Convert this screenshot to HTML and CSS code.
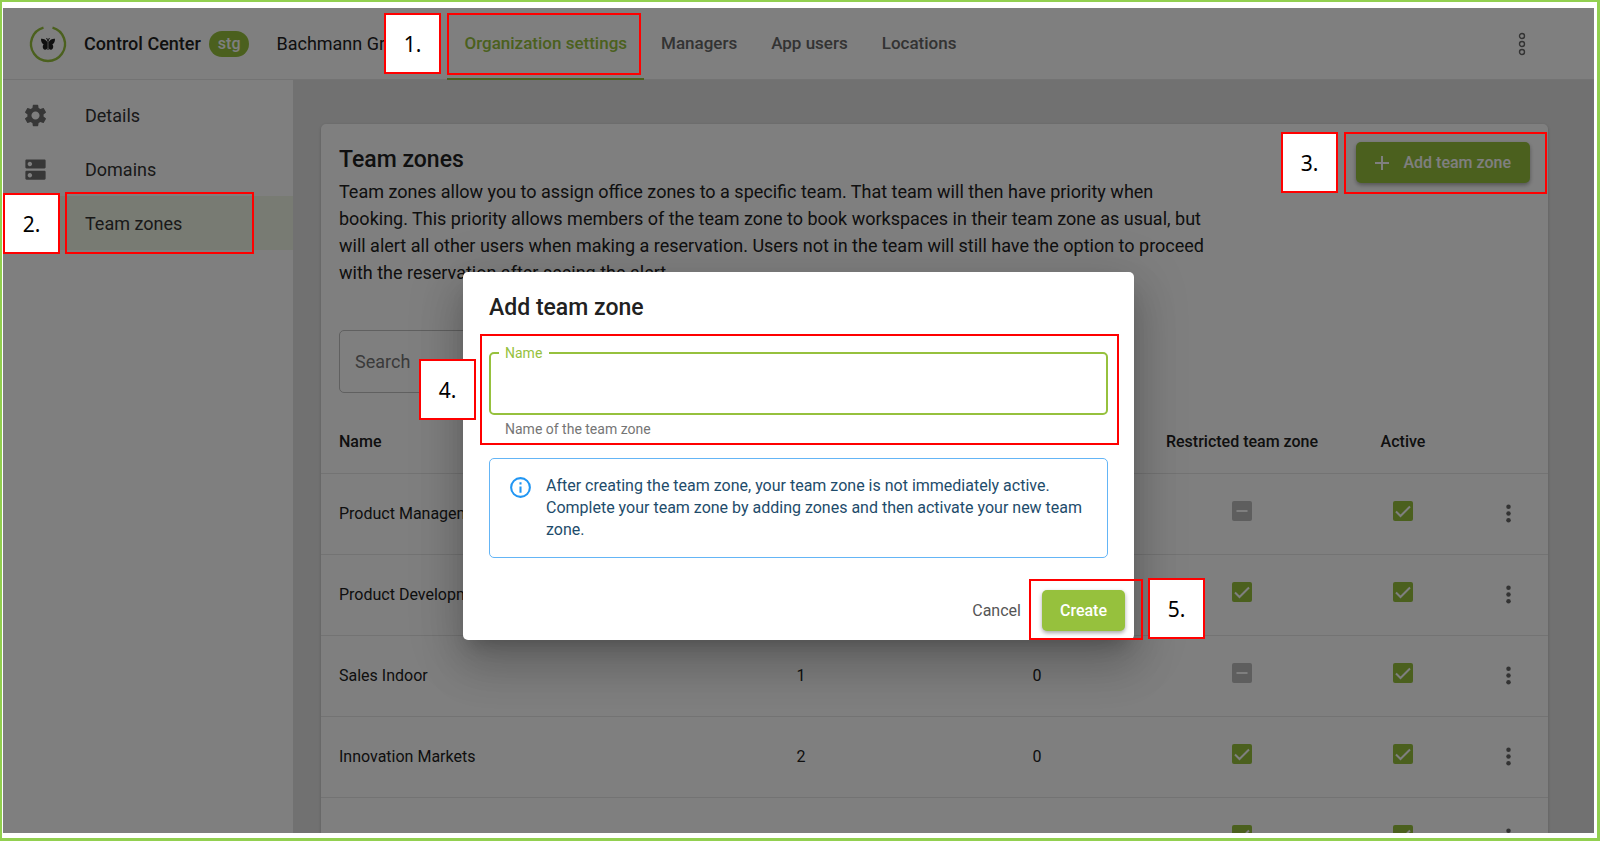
FILE: index.html
```html
<!DOCTYPE html>
<html lang="en">
<head>
<meta charset="utf-8">
<title>Control Center</title>
<link rel="stylesheet" href="styles.css">
</head>
<body>
<svg class="defs" aria-hidden="true">
  <symbol id="tick" viewBox="0 0 24 24"><rect x="2" y="2" width="20" height="20" rx="2"/><path class="mark" d="M5 12.500l4.500 4.500L19 7.500"/></symbol>
  <symbol id="dash" viewBox="0 0 24 24"><rect x="2" y="2" width="20" height="20" rx="2"/><path class="mark" d="M6.500 12h11"/></symbol>
  <symbol id="dots" viewBox="0 0 24 24"><circle cx="12" cy="6" r="2"/><circle cx="12" cy="12" r="2"/><circle cx="12" cy="18" r="2"/></symbol>
</svg>
<div class="frame">
  <div class="app">
    <header class="topbar">
      <svg class="logo" viewBox="0 0 36 36" aria-hidden="true">
        <path class="ring" d="M13.500 1.600A17 17 0 1 0 22.500 1.600"/>
        <path class="fly" d="M17.400 16C16 13.600 13.200 12.400 11 12.800c0 2.600.8 5 2.700 5.600-1.600 1.300-1.100 4.800 1.200 5.400 1.400.2 2.200-.8 2.500-2zM18.600 16c1.400-2.400 4.200-3.600 6.400-3.200 0 2.600-.8 5-2.700 5.600 1.600 1.300 1.100 4.800-1.200 5.400-1.400.2-2.200-.8-2.500-2z"/>
        <path class="feeler" d="M18 24v-9l-1.400-3M18 15l1.400-3"/>
      </svg>
      <span class="product">Control Center</span>
      <span class="stage">stg</span>
      <span class="org">Bachmann Gr</span>
      <nav class="tabs">
        <a class="tab active" href="#">Organization settings</a>
        <a class="tab" href="#">Managers</a>
        <a class="tab" href="#">App users</a>
        <a class="tab" href="#">Locations</a>
      </nav>
      <button class="icon-btn more" aria-label="More">
        <svg viewBox="0 0 8 24"><circle cx="4" cy="4" r="2.500"/><circle cx="4" cy="12" r="2.500"/><circle cx="4" cy="20" r="2.500"/></svg>
      </button>
    </header>
    <div class="body">
      <nav class="sidebar">
        <a class="side-item" href="#">
          <svg viewBox="0 0 24 24"><path d="M19.140 12.940c.04-.3.06-.61.06-.94 0-.32-.02-.64-.07-.94l2.030-1.580c.18-.14.23-.41.12-.61l-1.920-3.320c-.12-.22-.37-.29-.59-.22l-2.390.96c-.5-.38-1.030-.7-1.620-.94l-.36-2.540c-.04-.24-.24-.41-.48-.41h-3.840c-.24 0-.43.17-.47.41l-.36 2.540c-.59.24-1.130.57-1.620.94l-2.390-.96c-.22-.08-.47 0-.59.22L2.740 8.870c-.12.21-.08.47.12.61l2.030 1.580c-.05.3-.09.63-.09.94s.02.64.07.94l-2.030 1.580c-.18.14-.23.41-.12.61l1.920 3.320c.12.22.37.29.59.22l2.390-.96c.5.38 1.030.7 1.620.94l.36 2.540c.05.24.24.41.48.41h3.840c.24 0 .44-.17.47-.41l.36-2.540c.59-.24 1.130-.56 1.620-.94l2.390.96c.22.08.47 0 .59-.22l1.920-3.320c.12-.22.07-.47-.12-.61l-2.010-1.580zM12 15.600c-1.980 0-3.600-1.620-3.600-3.600s1.620-3.600 3.600-3.600 3.600 1.620 3.600 3.600-1.620 3.600-3.600 3.600z"/></svg>
          Details
        </a>
        <a class="side-item" href="#">
          <svg viewBox="0 0 24 24"><path d="M20 13H4c-.55 0-1 .45-1 1v6c0 .55.45 1 1 1h16c.55 0 1-.45 1-1v-6c0-.55-.45-1-1-1zM7 19c-1.100 0-2-.9-2-2s.9-2 2-2 2 .9 2 2-.9 2-2 2zM20 3H4c-.55 0-1 .45-1 1v6c0 .55.45 1 1 1h16c.55 0 1-.45 1-1V4c0-.55-.45-1-1-1zM7 9c-1.100 0-2-.9-2-2s.9-2 2-2 2 .9 2 2-.9 2-2 2z"/></svg>
          Domains
        </a>
        <a class="side-item selected" href="#"><span class="no-icon"></span>Team zones</a>
      </nav>
      <main class="content">
        <section class="card">
          <div class="card-head">
            <div class="intro">
              <h1>Team zones</h1>
              <p>Team zones allow you to assign office zones to a specific team. That team will then have priority when booking. This priority allows members of the team zone to book workspaces in their team zone as usual, but will alert all other users when making a reservation. Users not in the team will still have the option to proceed with the reservation after seeing the alert.</p>
            </div>
            <button class="btn add">
              <svg viewBox="0 0 14 14"><path d="M7 0v14M0 7h14"/></svg>
              Add team zone
            </button>
          </div>
          <input class="search" type="text" placeholder="Search" aria-label="Search">
          <table class="zones">
            <colgroup><col><col class="c-a"><col class="c-b"><col class="c-restricted"><col class="c-active"><col class="c-menu"></colgroup>
            <thead><tr><th>Name</th><th></th><th></th><th>Restricted team zone</th><th>Active</th><th></th></tr></thead>
            <tbody>
              <tr><td>Product Management</td><td></td><td></td>
                <td><label class="box off"><input type="checkbox" aria-label="Restricted"><svg><use href="#dash"/></svg></label></td>
                <td><label class="box"><input type="checkbox" checked aria-label="Active"><svg><use href="#tick"/></svg></label></td>
                <td><button class="icon-btn" aria-label="Actions"><svg><use href="#dots"/></svg></button></td></tr>
              <tr><td>Product Development</td><td></td><td></td>
                <td><label class="box"><input type="checkbox" checked aria-label="Restricted"><svg><use href="#tick"/></svg></label></td>
                <td><label class="box"><input type="checkbox" checked aria-label="Active"><svg><use href="#tick"/></svg></label></td>
                <td><button class="icon-btn" aria-label="Actions"><svg><use href="#dots"/></svg></button></td></tr>
              <tr><td>Sales Indoor</td><td>1</td><td>0</td>
                <td><label class="box off"><input type="checkbox" aria-label="Restricted"><svg><use href="#dash"/></svg></label></td>
                <td><label class="box"><input type="checkbox" checked aria-label="Active"><svg><use href="#tick"/></svg></label></td>
                <td><button class="icon-btn" aria-label="Actions"><svg><use href="#dots"/></svg></button></td></tr>
              <tr><td>Innovation Markets</td><td>2</td><td>0</td>
                <td><label class="box"><input type="checkbox" checked aria-label="Restricted"><svg><use href="#tick"/></svg></label></td>
                <td><label class="box"><input type="checkbox" checked aria-label="Active"><svg><use href="#tick"/></svg></label></td>
                <td><button class="icon-btn" aria-label="Actions"><svg><use href="#dots"/></svg></button></td></tr>
              <tr><td></td><td></td><td></td>
                <td><label class="box"><input type="checkbox" checked aria-label="Restricted"><svg><use href="#tick"/></svg></label></td>
                <td><label class="box"><input type="checkbox" checked aria-label="Active"><svg><use href="#tick"/></svg></label></td>
                <td><button class="icon-btn" aria-label="Actions"><svg><use href="#dots"/></svg></button></td></tr>
            </tbody>
          </table>
        </section>
      </main>
    </div>
    <div class="backdrop">
      <form class="dialog" role="dialog" aria-labelledby="dialog-title">
        <h2 id="dialog-title">Add team zone</h2>
        <fieldset class="field">
          <legend><label for="zone-name">Name</label></legend>
          <input id="zone-name" type="text" aria-describedby="zone-help">
        </fieldset>
        <p class="help" id="zone-help">Name of the team zone</p>
        <div class="info">
          <svg viewBox="0 0 24 24"><circle cx="12" cy="12" r="9"/><path d="M12 11v6M12 7v2"/></svg>
          <p>After creating the team zone, your team zone is not immediately active. Complete your team zone by adding zones and then activate your new team zone.</p>
        </div>
        <div class="actions">
          <button type="button" class="btn plain">Cancel</button>
          <button type="button" class="btn create">Create</button>
        </div>
      </form>
    </div>
  </div>
</div>
<div class="mark-box m1"></div><div class="step s1">1.</div>
<div class="mark-box m2"></div><div class="step s2">2.</div>
<div class="mark-box m3"></div><div class="step s3">3.</div>
<div class="mark-box m4"></div><div class="step s4">4.</div>
<div class="mark-box m5"></div><div class="step s5">5.</div>
</body>
</html>
```
FILE: styles.css
```css
* { box-sizing: border-box; }
body {
  margin: 0;
  font-family: Roboto, "Liberation Sans", sans-serif;
  font-size: 16px;
  color: #212121;
  background: #fff;
}
h1, h2, p { margin: 0; }
a { color: inherit; text-decoration: none; }
button, input { font: inherit; }
.defs { position: absolute; width: 0; height: 0; }
.frame {
  position: relative;
  height: 100vh;
  border: solid #92d050;
  border-width: 2px 3px 3px 2px;
  padding: 6px 3px 5px 1px;
}
.app {
  position: relative;
  height: 100%;
  display: flex;
  flex-direction: column;
  overflow: hidden;
  background: #e2e2e2;
}

/* top bar */
.topbar {
  display: flex;
  align-items: center;
  height: 72px;
  flex: none;
  padding: 0 68px 0 27px;
  background: #fff;
  border-bottom: 1px solid #e6e6e6;
}
.logo { width: 36px; height: 36px; margin-right: 18px; overflow: visible; }
.logo .ring { fill: none; stroke: #96c13d; stroke-width: 2.400; }
.logo .fly { fill: #212121; }
.logo .feeler { fill: none; stroke: #212121; stroke-width: 1; }
.product { font-size: 18px; font-weight: 500; }
.stage {
  margin-left: 8px;
  padding: 0 9px;
  height: 26px;
  line-height: 26px;
  border-radius: 13px;
  background: #96c13d;
  color: #fff;
  font-weight: 500;
}
.org { width: 171px; margin-left: 27px; font-size: 18px; white-space: nowrap; }
.tabs { display: flex; align-self: stretch; margin-bottom: -1px; }
.tab {
  display: flex;
  align-items: center;
  padding: 0 17px;
  border-bottom: 2px solid transparent;
  color: #666;
  font-size: 17px;
  font-weight: 500;
}
.tab.active { color: #96c13d; border-color: #96c13d; }
.icon-btn { padding: 0; border: 0; background: none; display: inline-grid; place-items: center; vertical-align: middle; }
.icon-btn svg { width: 27px; height: 27px; fill: #666; }
.more { margin-left: auto; }
.more svg { width: 8px; height: 24px; fill: none; stroke: #666; stroke-width: 1.400; }

/* body */
.body { display: flex; flex: 1; min-height: 0; }
.sidebar { width: 290px; flex: none; padding-top: 8px; background: #fff; color: #333; }
.side-item {
  display: flex;
  align-items: center;
  height: 54px;
  padding-left: 19px;
  font-size: 18px;
}
.side-item svg, .no-icon { width: 27px; height: 27px; margin-right: 36px; fill: #6f6f6f; }
.side-item.selected { background: #f1f6e7; }
.content { flex: 1; padding: 44px 46px 0 28px; }
.card { background: #fff; border-radius: 5px; box-shadow: 0 1px 3px rgba(0, 0, 0, .2); padding-bottom: 20px; }
.card-head { display: flex; justify-content: space-between; align-items: flex-start; padding: 18px 18px 0; }
.intro { width: 884px; }
h1 { font-size: 23px; line-height: 36px; font-weight: 500; }
.intro p { font-size: 18px; line-height: 27px; }
.btn {
  display: flex;
  align-items: center;
  height: 41px;
  padding: 0 18px;
  border: 0;
  border-radius: 5px;
  font-weight: 500;
  background: #96c13d;
  color: #fff;
  box-shadow: 0 2px 4px rgba(0, 0, 0, .35);
}
.add { padding: 0 19px; }
.add svg { width: 14px; height: 14px; margin-right: 14px; stroke: #fff; stroke-width: 2; }
.search {
  display: block;
  width: 360px;
  height: 63px;
  margin: 44px 18px 18px;
  padding: 0 15px;
  border: 1px solid #c0c0c0;
  border-radius: 5px;
  font-size: 18px;
  background: transparent;
}
.search::placeholder { color: #757575; }

/* table */
.zones { width: 100%; table-layout: fixed; border-collapse: collapse; }
.c-a { width: 232px; }
.c-b { width: 240px; }
.c-restricted { width: 170px; }
.c-active { width: 152px; }
.c-menu { width: 69px; }
.zones th, .zones td { padding: 0; height: 81px; text-align: center; border-bottom: 1px solid #e6e6e6; white-space: nowrap; }
.zones th { height: 62px; font-weight: 500; }
.zones th:first-child, .zones td:first-child { text-align: left; padding-left: 18px; }
.zones td:last-child { padding-right: 11px; }
.box { display: inline-grid; margin-bottom: 6px; vertical-align: middle; }
.box input { grid-area: 1 / 1; appearance: none; width: 24px; height: 24px; margin: 0; }
.box svg { grid-area: 1 / 1; width: 24px; height: 24px; fill: #96c13d; }
.box.off svg { fill: #bdbdbd; }
.mark { fill: none; stroke: #fff; stroke-width: 2; }

/* dialog */
.backdrop { position: absolute; inset: 0; display: grid; place-items: center; padding-top: 70px; background: rgba(0, 0, 0, .5); }
.dialog {
  width: 671px;
  padding: 18px 26px 9px;
  border-radius: 5px;
  background: #fff;
  box-shadow: 0 12px 17px -8px rgba(0, 0, 0, .2), 0 27px 43px 3px rgba(0, 0, 0, .14), 0 10px 52px 9px rgba(0, 0, 0, .12);
}
h2 { font-size: 23px; line-height: 36px; font-weight: 500; }
.field { margin: 19px 0 0; padding: 0 8px; border: 2px solid #96c13d; border-radius: 5px; min-width: 0; height: 70px; }
.field legend { padding: 0 7px 0 6px; font-size: 14px; line-height: 16px; color: #96c13d; }
.field input { width: 100%; height: 48px; border: 0; padding: 0 6px; outline: 0; background: transparent; font-size: 18px; }
.help { padding: 6px 16px 0; font-size: 14px; line-height: 16px; color: #757575; }
.info {
  display: flex;
  margin-top: 21px;
  padding: 16px 20px 16px 18px;
  border: 1px solid #64b5f6;
  border-radius: 5px;
  color: #1e4c6b;
  line-height: 22px;
}
.info svg { width: 25px; height: 25px; flex: none; margin-right: 13px; fill: none; stroke: #2196f3; stroke-width: 2; }
.actions { display: flex; justify-content: flex-end; gap: 3px; margin: 32px -17px 0 0; }
.plain { background: none; box-shadow: none; color: #555; font-weight: 400; }

/* numbered annotations */
.mark-box, .step { position: absolute; border: 2px solid #f00; }
.step {
  display: grid;
  place-items: center;
  width: 57px;
  height: 61px;
  background: #fff;
  color: #000;
  font-family: "Noto Sans", sans-serif;
  font-size: 21px;
}
.m1 { left: 447px; top: 13px; width: 194px; height: 62px; }
.s1 { left: 384px; top: 13px; }
.m2 { left: 65px; top: 192px; width: 189px; height: 62px; }
.s2 { left: 3px; top: 193px; }
.m3 { right: 53px; top: 132px; width: 203px; height: 62px; }
.s3 { right: 262px; top: 132px; }
.m4 { left: calc(50% - 320px); top: 334px; width: 639px; height: 111px; }
.s4 { left: calc(50% - 381px); top: 359px; }
.m5 { left: calc(50% + 229px); top: 579px; width: 114px; height: 61px; }
.s5 { left: calc(50% + 348px); top: 578px; }
```
